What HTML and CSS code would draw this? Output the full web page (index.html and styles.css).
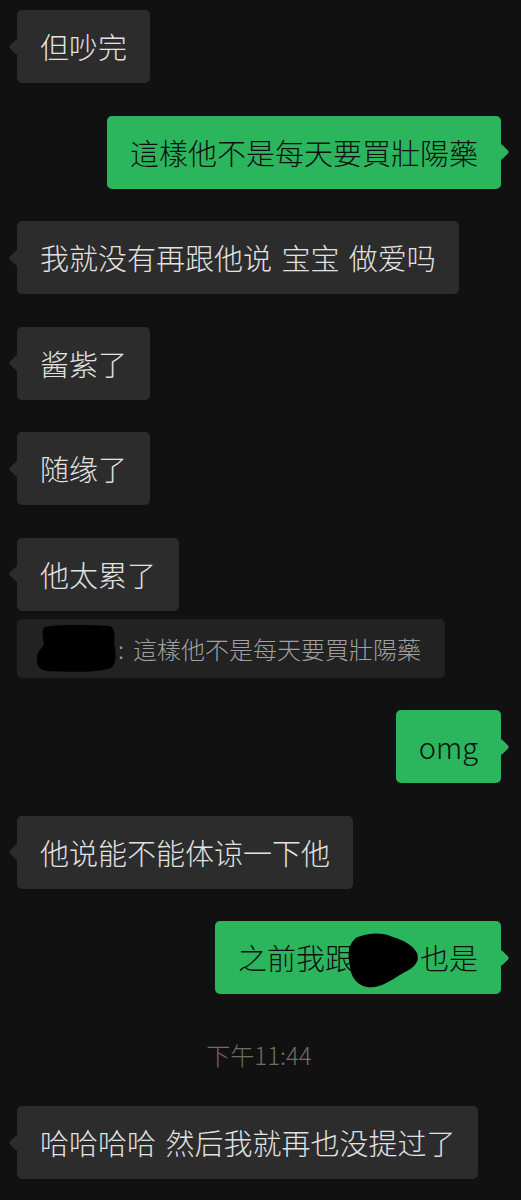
FILE: index.html
```html
<!DOCTYPE html>
<html lang="zh">
<head>
  <meta charset="UTF-8">
  <meta name="viewport" content="width=device-width, initial-scale=1.0">
  <title>聊天</title>
  <link rel="stylesheet" href="styles.css">
</head>
<body>
  <div class="chat">
    <div class="row"><div class="bubble in">但吵完</div></div>
    <div class="row out"><div class="bubble me">這樣他不是每天要買壯陽藥</div></div>
    <div class="row"><div class="bubble in">我就没有再跟他说 宝宝 做爱吗</div></div>
    <div class="row"><div class="bubble in">酱紫了</div></div>
    <div class="row"><div class="bubble in">随缘了</div></div>
    <div class="row has-quote"><div class="bubble in">他太累了</div></div>
    <div class="row">
      <div class="quote">
        <span class="redact redact-quote">
          <svg viewBox="0 0 82 50"><path d="M10,4 C20,1 60,2 74,3 C80,4 80,12 79,20 C81,30 82,40 76,45 C64,50 30,49 12,48 C4,47 1,42 2,34 C3,28 6,26 9,22 C8,14 6,6 10,4 Z"/></svg>
        </span><span class="colon">:</span>這樣他不是每天要買壯陽藥
      </div>
    </div>
    <div class="row out"><div class="bubble me">omg</div></div>
    <div class="row"><div class="bubble in">他说能不能体谅一下他</div></div>
    <div class="row out">
      <div class="bubble me">之前我跟<span class="redact redact-inline">
          <svg viewBox="0 0 76 56"><path d="M2,28 C0,14 6,4 14,3 C22,0 36,-1 46,4 C56,7 66,12 70,20 C73,28 68,34 58,39 C50,43 42,50 32,53 C22,56 12,54 6,44 C3,38 3,33 2,28 Z"/></svg>
        </span>也是</div>
    </div>
    <div class="time">下午11:44</div>
    <div class="row"><div class="bubble in">哈哈哈哈 然后我就再也没提过了</div></div>
  </div>
</body>
</html>
```

FILE: styles.css
```css
body {
  margin: 0;
  background: #111111;
  font-family: "Noto Sans CJK SC", "Noto Sans", sans-serif;
  font-weight: 300;
}
.chat {
  padding: 10px 20px 0 17px;
}
.row {
  display: flex;
  margin-bottom: 32.5px;
}
.row.out {
  justify-content: flex-end;
}
.row.has-quote {
  margin-bottom: 8px;
}
.bubble {
  position: relative;
  font-size: 29px;
  line-height: 41px;
  padding: 16px 23px;
  border-radius: 5px;
  word-spacing: 3px;
  white-space: nowrap;
}
.bubble::before {
  content: "";
  position: absolute;
  top: 50%;
  width: 12px;
  height: 12px;
  border-radius: 2px;
  background: inherit;
  transform: translateY(-50%) rotate(45deg);
}
.bubble.in {
  background: #2c2c2c;
  color: #e2e2e2;
}
.bubble.in::before {
  left: -6px;
}
.bubble.me {
  background: #2bb65e;
  color: #0f0f0f;
}
.bubble.me::before {
  right: -6px;
}
.bubble.me.short {
  padding: 16px 24px;
}
/* quoted reply under a message */
.quote {
  display: flex;
  align-items: flex-start;
  background: #222222;
  color: #a0a0a0;
  font-size: 24px;
  line-height: 33px;
  padding: 13px 24px 13px 18px;
  border-radius: 5px;
  white-space: nowrap;
}
.colon {
  display: inline-block;
  width: 15px;
  padding-left: 1px;
}
/* scribbled-out names */
.redact {
  display: inline-block;
  position: relative;
  vertical-align: top;
}
.redact svg {
  position: absolute;
  fill: #000;
}
.redact-quote {
  width: 82px;
  height: 33px;
}
.redact-quote svg {
  left: 0;
  top: -9px;
  width: 82px;
  height: 50px;
}
.redact-inline {
  width: 66px;
  height: 41px;
}
.redact-inline svg {
  left: -8px;
  top: -4px;
  width: 78px;
  height: 56px;
}
.time {
  text-align: center;
  color: #6d6d6d;
  font-size: 24px;
  line-height: 30px;
  padding: 13px 0 36.5px;
}
```
